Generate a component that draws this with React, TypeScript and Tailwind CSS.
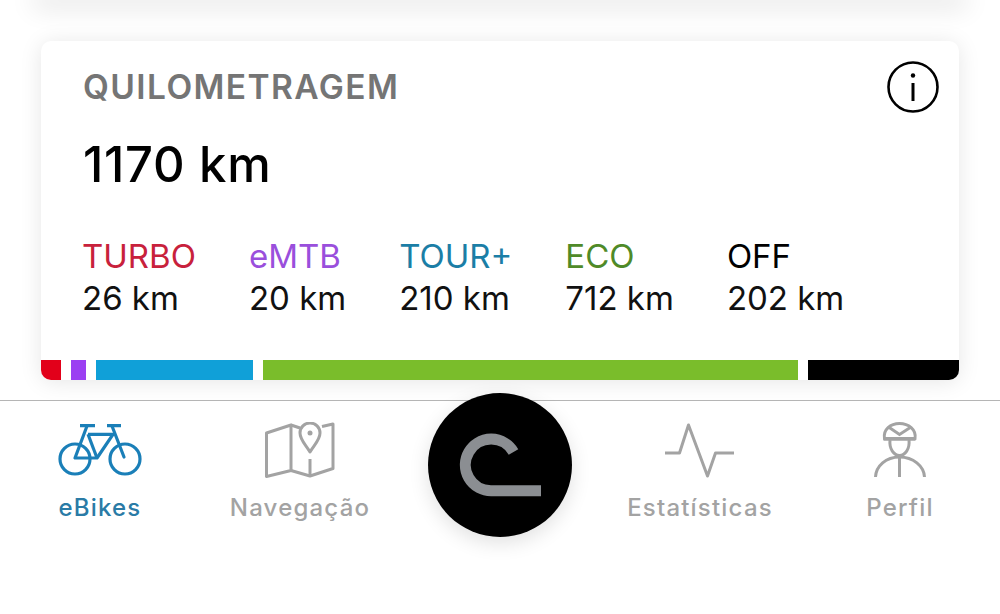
import React from "react";

const modes = [
  { name: "TURBO", km: "26 km", color: "text-[#c8213c]" },
  { name: "eMTB", km: "20 km", color: "text-[#9a4fdc]" },
  { name: "TOUR+", km: "210 km", color: "text-[#1b7ea6]" },
  { name: "ECO", km: "712 km", color: "text-[#4f8a28]" },
  { name: "OFF", km: "202 km", color: "text-black" },
];

const segments = [
  { width: "w-[20px]", color: "bg-[#e2001a]" },
  { width: "w-[15px]", color: "bg-[#9b40f2]" },
  { width: "w-[157px]", color: "bg-[#10a0d8]" },
  { width: "w-[535px]", color: "bg-[#7abd2b]" },
  { width: "w-[151px]", color: "bg-black" },
];

function BikeIcon() {
  return (
    <svg width="84" height="56" viewBox="0 0 84 56" fill="none" stroke="#1a7fb8" strokeWidth="3.200" strokeLinejoin="round">
      <circle cx="17" cy="37" r="15" />
      <circle cx="67" cy="37" r="15" />
      <path d="M22 3.700h15M49 3.700h14" />
      <path d="M29 4 17 36h22L55 12.300H30" />
      <path d="M30 12.300 39 36" />
      <path d="M54 4l12 31" strokeLinecap="round" />
    </svg>
  );
}

function MapIcon() {
  return (
    <svg width="70" height="56" viewBox="0 0 70 56" fill="none" stroke="#a3a3a3" strokeWidth="3" strokeLinejoin="round">
      <path d="M1.500 11 26 3v45.500L1.500 54.500z" />
      <path d="M26 3l9 3M26 48.500 45 54l23-7.500V2l-11 2.500" />
      <path d="M45 37v17" />
      <path d="M45 30c-4-7-10-12-10-19a10 10 0 0 1 20 0c0 7-6 12-10 19z" />
      <circle cx="45" cy="11" r="2.500" fill="#a3a3a3" stroke="none" />
    </svg>
  );
}

function PulseIcon() {
  return (
    <svg width="70" height="56" viewBox="0 0 70 56" fill="none" stroke="#a3a3a3" strokeWidth="3" strokeLinejoin="round">
      <path d="M0 31h14.500L23.500 3l19 51 8-23H69" />
    </svg>
  );
}

function RiderIcon() {
  return (
    <svg width="52" height="56" viewBox="0 0 52 56" fill="none" stroke="#a3a3a3" strokeWidth="3">
      <path d="M1.500 55C2 44 12 35 25.500 35S50 44 50.500 55" />
      <path d="M25.500 35v20" />
      <path d="M16 18c-1 9 4 15.500 9.500 15.500S36 27 35 18" />
      <path d="M10.500 16.500h30.500c1.500-9-6.500-15-15.500-15S9 7.500 10.500 16.500z" />
      <path d="M9.500 17h32" strokeWidth="3.500" />
      <path d="M14.500 5l11 7.500L37 5" />
    </svg>
  );
}

function NavItem({ label, active, children }: { label: string; active?: boolean; children: React.ReactNode }) {
  return (
    <div className="flex flex-col items-center">
      <div className="h-[56px] mt-[21px] flex items-end">{children}</div>
      <span className={`mt-[14px] text-[24px] leading-[32px] tracking-[1.200px] font-medium ${active ? "text-[#2a7ba6]" : "text-[#a3a3a3]"}`}>
        {label}
      </span>
    </div>
  );
}

export default function App() {
  return (
    <div className="h-[614px] w-[1000px] overflow-hidden bg-white font-['Inter',sans-serif] flex flex-col">
      {/* Lower edge of the card above, scrolled out of the viewport */}
      <div className="mx-[41px] h-0 shadow-[0_0_26px_8px_rgba(0,0,0,0.11)]" />

      <section className="mx-[41px] mt-[41px] h-[339px] bg-white rounded-[10px] overflow-hidden flex flex-col shadow-[0_2px_22px_rgba(0,0,0,0.1)]">
        <header className="flex items-start justify-between pl-[42px] pr-[20px] pt-[20px]">
          <h2 className="text-[33.500px] leading-[52px] tracking-[1.400px] font-semibold text-[#757575]">QUILOMETRAGEM</h2>
          <svg width="52" height="52" viewBox="0 0 52 52" fill="none" stroke="#000" strokeWidth="2.600">
            <circle cx="26" cy="26" r="24.500" />
            <path d="M26 22v18" strokeWidth="3" />
            <circle cx="26" cy="14.500" r="2.200" fill="#000" stroke="none" />
          </svg>
        </header>

        <p className="pl-[42px] mt-[22px] text-[49px] leading-[60px] tracking-[0.700px] font-medium text-black">1170 km</p>

        <div className="pl-[41px] mt-[40px] flex gap-[53px]">
          {modes.map((m) => (
            <div key={m.name} className="flex flex-col text-[33px] leading-[42px]">
              <span className={m.color}>{m.name}</span>
              <span className="text-[#111]">{m.km}</span>
            </div>
          ))}
        </div>

        <div className="mt-auto flex gap-[10px] h-[20px]">
          {segments.map((s) => (
            <div key={s.color} className={`${s.width} ${s.color}`} />
          ))}
        </div>
      </section>

      <nav className="mt-[20px] border-t border-[#b5b5b5] grid grid-cols-5 flex-1">
        <NavItem label="eBikes" active>
          <BikeIcon />
        </NavItem>
        <NavItem label="Navegação">
          <MapIcon />
        </NavItem>
        <div className="flex justify-center">
          <button className="-mt-[8px] w-[144px] h-[144px] rounded-full bg-black shadow-[0_6px_20px_rgba(0,0,0,0.12)] flex items-center justify-center">
            <svg width="144" height="144" viewBox="0 0 144 144" fill="none" stroke="#8b8e92" strokeWidth="11">
              <path d="M113 97.700H63A25.800 25.800 0 1 1 85.500 59" />
            </svg>
          </button>
        </div>
        <NavItem label="Estatísticas">
          <PulseIcon />
        </NavItem>
        <NavItem label="Perfil">
          <RiderIcon />
        </NavItem>
      </nav>
    </div>
  );
}
